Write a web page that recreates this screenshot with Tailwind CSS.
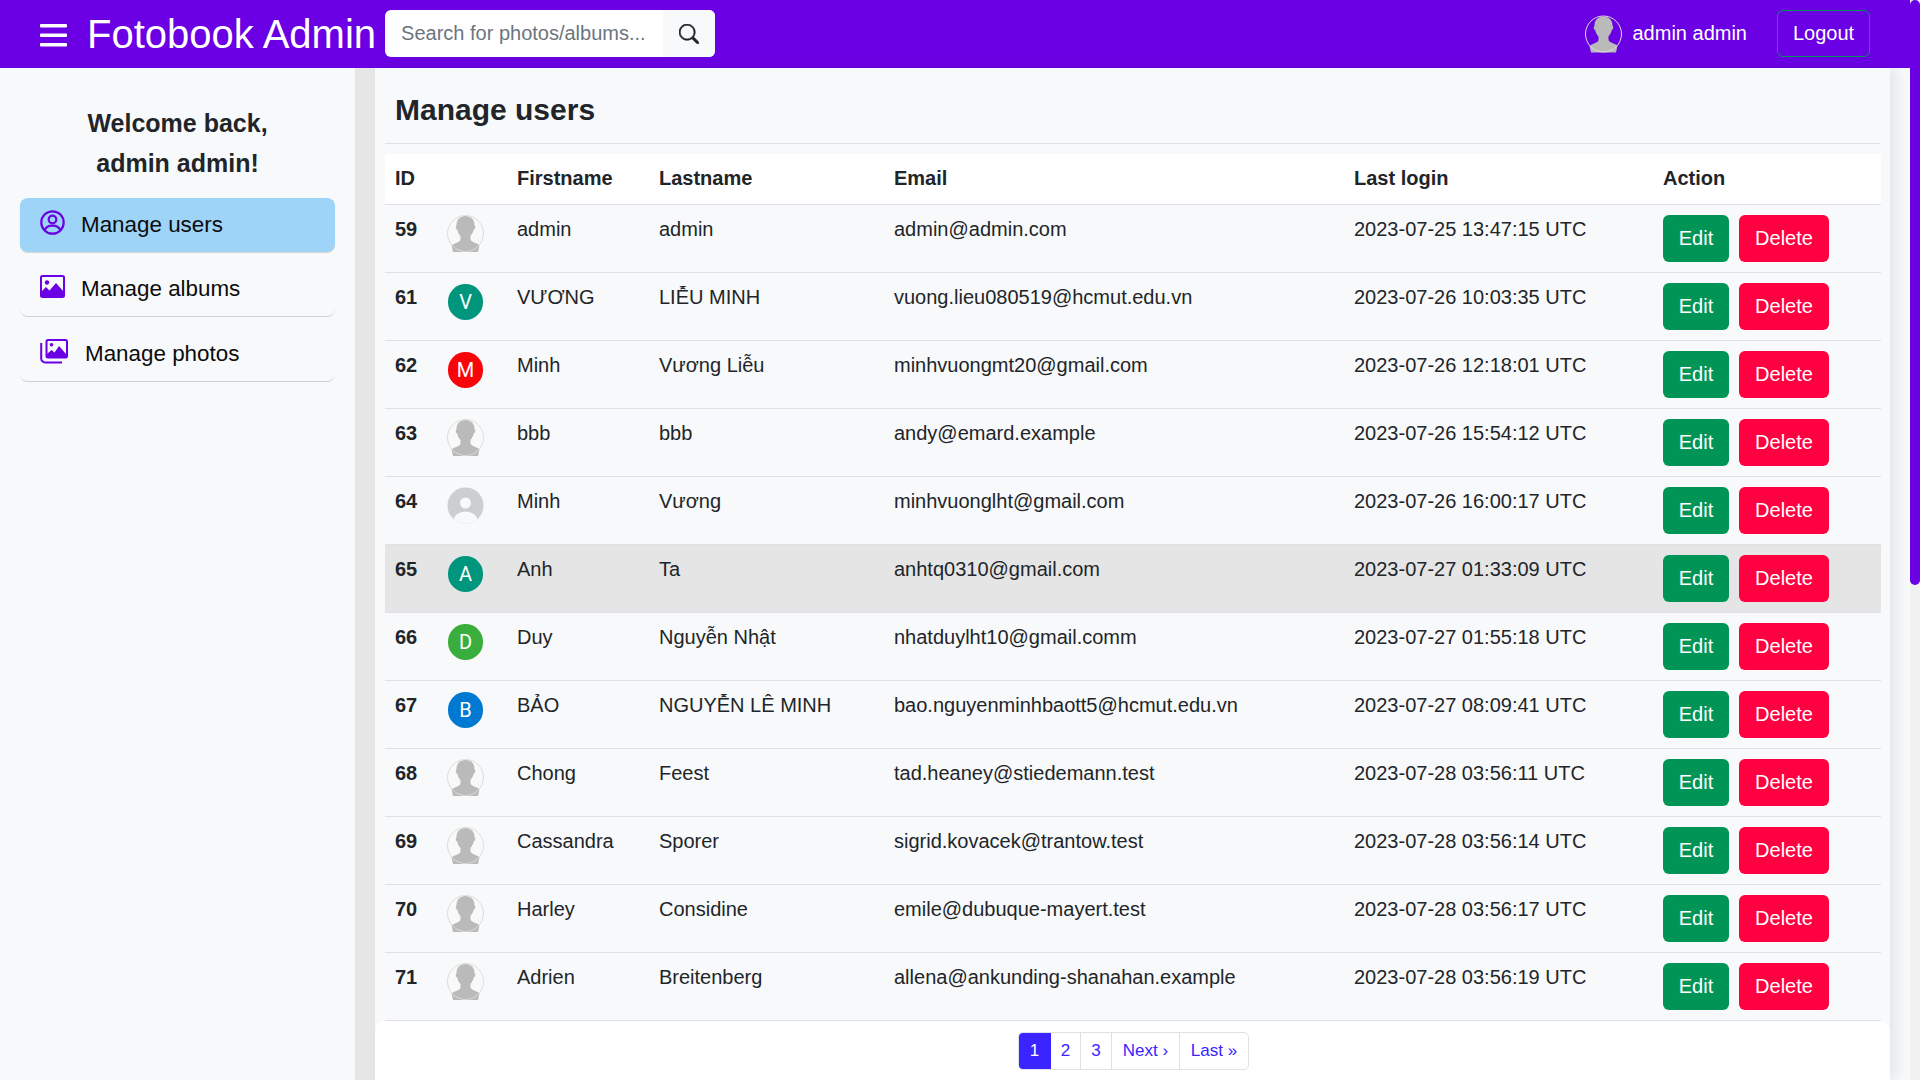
<!doctype html>
<html lang="en">
<head>
<meta charset="utf-8">
<title>Fotobook Admin</title>
<script src="https://cdn.jsdelivr.net/npm/@tailwindcss/browser@4"></script>
</head>
<body class="relative h-screen w-[1920px] overflow-hidden bg-[#f8f9fa] font-['Liberation_Sans',Arial,sans-serif] text-[20px] leading-[30px] text-[#212529]">
<svg class="hidden">
  <symbol id="sil" viewBox="0 0 37 37">
    <clipPath id="silc"><circle cx="18.5" cy="18.5" r="18"/></clipPath>
    <g clip-path="url(#silc)"><path fill="#bababa" d="M18.5 1C13 1 9.500 4.500 9.500 10c0 .8-.8 1-.8 2.200 0 1.300.7 2 1.500 2.600.5 2.500 1.700 4.700 3.300 6.200v3c0 1.500-1 2.500-2.700 3.200-2.500 1-4.500 1.700-6.300 3.300L6 37h25l1.500-6.800c-1.800-1.600-3.800-2.300-6.300-3.300-1.700-.7-2.700-1.700-2.700-3.200v-3c1.600-1.500 2.800-3.700 3.300-6.200.8-.6 1.500-1.300 1.500-2.600 0-1.200-.8-1.400-.8-2.200C27.500 4.500 24 1 18.500 1z"/></g>
    <circle cx="18.500" cy="18.500" r="18" fill="none" stroke="#dcdcdc" stroke-width="1"/>
  </symbol>
</svg>

<nav class="flex h-[68px] w-[1910px] items-center bg-[#6a00e3] pb-px pl-[40px] text-white">
  <svg class="mr-[20px] h-[26px] w-[27px]" viewBox="0 0 27 26" fill="#fff"><rect y="3" width="27" height="3.500" rx="1"/><rect y="12.500" width="27" height="3.500" rx="1"/><rect y="22" width="27" height="3.500" rx="1"/></svg>
  <span class="mr-[9px] whitespace-nowrap text-[40px] leading-[48px]">Fotobook Admin</span>
  <div class="flex h-[47px] w-[330px] overflow-hidden rounded-[6px] bg-white">
    <div class="flex w-[278px] items-center pb-[2px] pl-[16px] text-[20px] text-[#6c757d]">Search for photos/albums...</div>
    <div class="flex w-[52px] items-center justify-center bg-[#f8f9fa]">
      <svg class="h-[20px] w-[20px]" viewBox="0 0 16 16" fill="#212529" stroke="#212529" stroke-width=".5"><path d="M11.742 10.344a6.500 6.500 0 1 0-1.397 1.398l3.850 3.850a1 1 0 0 0 1.415-1.414l-3.868-3.834zM12 6.500a5.500 5.500 0 1 1-11 0 5.500 5.500 0 0 1 11 0z"/></svg>
    </div>
  </div>
  <div class="ml-auto flex items-center pr-[40px]">
    <svg class="mr-[10px] h-[38px] w-[37px]"><use href="#sil"/></svg>
    <span class="mr-[30px] pb-[2px]">admin admin</span>
    <span class="flex h-[47px] w-[93px] items-center justify-center rounded-[6px] border border-[#009557] pb-[2px]">Logout</span>
  </div>
</nav>

<div class="flex h-[1012px] w-[1910px]">
  <aside class="w-[355px] shrink-0 bg-[#f8f9fa] px-[20px] pt-[35px]">
    <p class="text-center text-[25px] leading-[40px] font-bold">Welcome back,<br>admin admin!</p>
    <ul class="mt-[15px] flex flex-col text-[22.400px] leading-[30px] text-[#0c0c0c]">
      <li class="flex h-[54px] items-center rounded-[8px] bg-[#9dd4f7] pl-[20px] shadow-[0_1px_1px_rgba(0,0,0,0.15)]">
        <svg class="mr-[16px] -mt-[6px] h-[25px] w-[25px]" viewBox="0 0 25 25" fill="none" stroke="#6a00e3" stroke-width="2.200"><circle cx="12.500" cy="12.500" r="11.200"/><circle cx="12.500" cy="9.500" r="3.800"/><path d="M4.700 20.500c1-3.500 4-4.800 7.800-4.800s6.800 1.300 7.800 4.800"/></svg>
        <span>Manage users</span>
      </li>
      <li class="mt-[11px] flex h-[54px] items-center rounded-b-[8px] border-b border-[#cfd0d2] pb-[2px] pl-[20px]">
        <svg class="mr-[16px] -mt-[2px] h-[25px] w-[25px]" viewBox="0 0 25 25"><rect x="1" y="1" width="23" height="21" rx="1.500" fill="none" stroke="#6a00e3" stroke-width="2"/><circle cx="7" cy="7.500" r="2.200" fill="#6a00e3"/><path d="M1 22v-5l5-5 3.500 3.500L16 8l8 9v5z" fill="#6a00e3"/></svg>
        <span>Manage albums</span>
      </li>
      <li class="mt-[11px] flex h-[54px] items-center rounded-b-[8px] border-b border-[#cfd0d2] pb-[2px] pl-[20px]">
        <svg class="mr-[17px] -mt-[5px] h-[25px] w-[28px]" viewBox="0 0 28 25"><path d="M1.200 4v15.500a4 4 0 0 0 4 4H22" fill="none" stroke="#6a00e3" stroke-width="2"/><rect x="6.500" y="1" width="20.500" height="17.500" rx="1.500" fill="none" stroke="#6a00e3" stroke-width="2"/><circle cx="11.500" cy="5.800" r="1.800" fill="#6a00e3"/><path d="M7 18v-3l4.500-4 3 2.500L19 7l7 8v3z" fill="#6a00e3"/></svg>
        <span>Manage photos</span>
      </li>
    </ul>
  </aside>
  <div class="w-[20px] shrink-0 bg-[#e6e6e6]"></div>

  <main class="flex w-[1515px] flex-col bg-[#f8f9fa] shadow-[8px_0_12px_rgba(0,0,0,0.07)]">
    <div class="mx-[10px] flex-1">
      <h1 class="flex h-[76px] items-center border-b border-[#dee2e6] pt-[8px] pl-[10px] text-[30px] font-bold">Manage users</h1>
      <table class="mt-[10px] w-[1496px] table-fixed border-collapse text-left">
        <colgroup><col class="w-[52px]"><col class="w-[70px]"><col class="w-[142px]"><col class="w-[235px]"><col class="w-[460px]"><col class="w-[309px]"><col class="w-[228px]"></colgroup>
        <thead>
          <tr class="h-[50px] border-b border-[#dee2e6] bg-white"><th class="pb-px pl-[10px]">ID</th><th></th><th class="pb-px pl-[10px]">Firstname</th><th class="pb-px pl-[10px]">Lastname</th><th class="pb-px pl-[10px]">Email</th><th class="pb-px pl-[10px]">Last login</th><th class="pb-px pl-[10px]">Action</th></tr>
        </thead>
        <tbody class="leading-[28px]">
          <tr class="h-[68px] border-b border-[#dee2e6]">
            <td class="pt-[10px] pl-[10px] align-top font-bold">59</td>
            <td class="pt-[10px] pl-[10px] align-top"><svg class="h-[37px] w-[37px]"><use href="#sil"/></svg></td>
            <td class="pt-[10px] pl-[10px] align-top">admin</td><td class="pt-[10px] pl-[10px] align-top">admin</td>
            <td class="pt-[10px] pl-[10px] align-top">admin@admin.com</td><td class="pt-[10px] pl-[10px] align-top">2023-07-25 13:47:15 UTC</td>
            <td class="pt-[10px] pl-[10px] align-top"><div class="flex gap-[10px]"><span class="flex h-[47px] w-[66px] items-center justify-center rounded-[6px] bg-[#009557] text-white">Edit</span><span class="flex h-[47px] w-[90px] items-center justify-center rounded-[6px] bg-[#ff0040] text-white">Delete</span></div></td>
          </tr>
          <tr class="h-[68px] border-b border-[#dee2e6]">
            <td class="pt-[10px] pl-[10px] align-top font-bold">61</td>
            <td class="pt-[10px] pl-[10px] align-top"><span class="mt-px ml-px flex h-[36px] w-[35px] items-center justify-center rounded-full bg-[#00967d] font-['Roboto',sans-serif] text-white">V</span></td>
            <td class="pt-[10px] pl-[10px] align-top">VƯƠNG</td><td class="pt-[10px] pl-[10px] align-top">LIỄU MINH</td>
            <td class="pt-[10px] pl-[10px] align-top">vuong.lieu080519@hcmut.edu.vn</td><td class="pt-[10px] pl-[10px] align-top">2023-07-26 10:03:35 UTC</td>
            <td class="pt-[10px] pl-[10px] align-top"><div class="flex gap-[10px]"><span class="flex h-[47px] w-[66px] items-center justify-center rounded-[6px] bg-[#009557] text-white">Edit</span><span class="flex h-[47px] w-[90px] items-center justify-center rounded-[6px] bg-[#ff0040] text-white">Delete</span></div></td>
          </tr>
          <tr class="h-[68px] border-b border-[#dee2e6]">
            <td class="pt-[10px] pl-[10px] align-top font-bold">62</td>
            <td class="pt-[10px] pl-[10px] align-top"><span class="mt-px ml-px flex h-[36px] w-[35px] items-center justify-center rounded-full bg-[#f80509] font-['Roboto',sans-serif] text-white">M</span></td>
            <td class="pt-[10px] pl-[10px] align-top">Minh</td><td class="pt-[10px] pl-[10px] align-top">Vương Liễu</td>
            <td class="pt-[10px] pl-[10px] align-top">minhvuongmt20@gmail.com</td><td class="pt-[10px] pl-[10px] align-top">2023-07-26 12:18:01 UTC</td>
            <td class="pt-[10px] pl-[10px] align-top"><div class="flex gap-[10px]"><span class="flex h-[47px] w-[66px] items-center justify-center rounded-[6px] bg-[#009557] text-white">Edit</span><span class="flex h-[47px] w-[90px] items-center justify-center rounded-[6px] bg-[#ff0040] text-white">Delete</span></div></td>
          </tr>
          <tr class="h-[68px] border-b border-[#dee2e6]">
            <td class="pt-[10px] pl-[10px] align-top font-bold">63</td>
            <td class="pt-[10px] pl-[10px] align-top"><svg class="h-[37px] w-[37px]"><use href="#sil"/></svg></td>
            <td class="pt-[10px] pl-[10px] align-top">bbb</td><td class="pt-[10px] pl-[10px] align-top">bbb</td>
            <td class="pt-[10px] pl-[10px] align-top">andy@emard.example</td><td class="pt-[10px] pl-[10px] align-top">2023-07-26 15:54:12 UTC</td>
            <td class="pt-[10px] pl-[10px] align-top"><div class="flex gap-[10px]"><span class="flex h-[47px] w-[66px] items-center justify-center rounded-[6px] bg-[#009557] text-white">Edit</span><span class="flex h-[47px] w-[90px] items-center justify-center rounded-[6px] bg-[#ff0040] text-white">Delete</span></div></td>
          </tr>
          <tr class="h-[68px] border-b border-[#dee2e6]">
            <td class="pt-[10px] pl-[10px] align-top font-bold">64</td>
            <td class="pt-[10px] pl-[10px] align-top"><svg class="h-[37px] w-[37px]" viewBox="0 0 37 37"><clipPath id="g64"><circle cx="18.500" cy="18.500" r="18"/></clipPath><circle cx="18.500" cy="18.500" r="18" fill="#ccced2"/><g clip-path="url(#g64)" fill="#f8f9fa"><circle cx="18.500" cy="16" r="5.500"/><ellipse cx="18.500" cy="34" rx="12" ry="9.500"/></g></svg></td>
            <td class="pt-[10px] pl-[10px] align-top">Minh</td><td class="pt-[10px] pl-[10px] align-top">Vương</td>
            <td class="pt-[10px] pl-[10px] align-top">minhvuonglht@gmail.com</td><td class="pt-[10px] pl-[10px] align-top">2023-07-26 16:00:17 UTC</td>
            <td class="pt-[10px] pl-[10px] align-top"><div class="flex gap-[10px]"><span class="flex h-[47px] w-[66px] items-center justify-center rounded-[6px] bg-[#009557] text-white">Edit</span><span class="flex h-[47px] w-[90px] items-center justify-center rounded-[6px] bg-[#ff0040] text-white">Delete</span></div></td>
          </tr>
          <tr class="h-[68px] border-b border-[#dee2e6] bg-[#e5e5e5]">
            <td class="pt-[10px] pl-[10px] align-top font-bold">65</td>
            <td class="pt-[10px] pl-[10px] align-top"><span class="mt-px ml-px flex h-[36px] w-[35px] items-center justify-center rounded-full bg-[#00967d] font-['Roboto',sans-serif] text-white">A</span></td>
            <td class="pt-[10px] pl-[10px] align-top">Anh</td><td class="pt-[10px] pl-[10px] align-top">Ta</td>
            <td class="pt-[10px] pl-[10px] align-top">anhtq0310@gmail.com</td><td class="pt-[10px] pl-[10px] align-top">2023-07-27 01:33:09 UTC</td>
            <td class="pt-[10px] pl-[10px] align-top"><div class="flex gap-[10px]"><span class="flex h-[47px] w-[66px] items-center justify-center rounded-[6px] bg-[#009557] text-white">Edit</span><span class="flex h-[47px] w-[90px] items-center justify-center rounded-[6px] bg-[#ff0040] text-white">Delete</span></div></td>
          </tr>
          <tr class="h-[68px] border-b border-[#dee2e6]">
            <td class="pt-[10px] pl-[10px] align-top font-bold">66</td>
            <td class="pt-[10px] pl-[10px] align-top"><span class="mt-px ml-px flex h-[36px] w-[35px] items-center justify-center rounded-full bg-[#39ae3c] font-['Roboto',sans-serif] text-white">D</span></td>
            <td class="pt-[10px] pl-[10px] align-top">Duy</td><td class="pt-[10px] pl-[10px] align-top">Nguyễn Nhật</td>
            <td class="pt-[10px] pl-[10px] align-top">nhatduylht10@gmail.comm</td><td class="pt-[10px] pl-[10px] align-top">2023-07-27 01:55:18 UTC</td>
            <td class="pt-[10px] pl-[10px] align-top"><div class="flex gap-[10px]"><span class="flex h-[47px] w-[66px] items-center justify-center rounded-[6px] bg-[#009557] text-white">Edit</span><span class="flex h-[47px] w-[90px] items-center justify-center rounded-[6px] bg-[#ff0040] text-white">Delete</span></div></td>
          </tr>
          <tr class="h-[68px] border-b border-[#dee2e6]">
            <td class="pt-[10px] pl-[10px] align-top font-bold">67</td>
            <td class="pt-[10px] pl-[10px] align-top"><span class="mt-px ml-px flex h-[36px] w-[35px] items-center justify-center rounded-full bg-[#0079d3] font-['Roboto',sans-serif] text-white">B</span></td>
            <td class="pt-[10px] pl-[10px] align-top">BẢO</td><td class="pt-[10px] pl-[10px] align-top">NGUYỄN LÊ MINH</td>
            <td class="pt-[10px] pl-[10px] align-top">bao.nguyenminhbaott5@hcmut.edu.vn</td><td class="pt-[10px] pl-[10px] align-top">2023-07-27 08:09:41 UTC</td>
            <td class="pt-[10px] pl-[10px] align-top"><div class="flex gap-[10px]"><span class="flex h-[47px] w-[66px] items-center justify-center rounded-[6px] bg-[#009557] text-white">Edit</span><span class="flex h-[47px] w-[90px] items-center justify-center rounded-[6px] bg-[#ff0040] text-white">Delete</span></div></td>
          </tr>
          <tr class="h-[68px] border-b border-[#dee2e6]">
            <td class="pt-[10px] pl-[10px] align-top font-bold">68</td>
            <td class="pt-[10px] pl-[10px] align-top"><svg class="h-[37px] w-[37px]"><use href="#sil"/></svg></td>
            <td class="pt-[10px] pl-[10px] align-top">Chong</td><td class="pt-[10px] pl-[10px] align-top">Feest</td>
            <td class="pt-[10px] pl-[10px] align-top">tad.heaney@stiedemann.test</td><td class="pt-[10px] pl-[10px] align-top">2023-07-28 03:56:11 UTC</td>
            <td class="pt-[10px] pl-[10px] align-top"><div class="flex gap-[10px]"><span class="flex h-[47px] w-[66px] items-center justify-center rounded-[6px] bg-[#009557] text-white">Edit</span><span class="flex h-[47px] w-[90px] items-center justify-center rounded-[6px] bg-[#ff0040] text-white">Delete</span></div></td>
          </tr>
          <tr class="h-[68px] border-b border-[#dee2e6]">
            <td class="pt-[10px] pl-[10px] align-top font-bold">69</td>
            <td class="pt-[10px] pl-[10px] align-top"><svg class="h-[37px] w-[37px]"><use href="#sil"/></svg></td>
            <td class="pt-[10px] pl-[10px] align-top">Cassandra</td><td class="pt-[10px] pl-[10px] align-top">Sporer</td>
            <td class="pt-[10px] pl-[10px] align-top">sigrid.kovacek@trantow.test</td><td class="pt-[10px] pl-[10px] align-top">2023-07-28 03:56:14 UTC</td>
            <td class="pt-[10px] pl-[10px] align-top"><div class="flex gap-[10px]"><span class="flex h-[47px] w-[66px] items-center justify-center rounded-[6px] bg-[#009557] text-white">Edit</span><span class="flex h-[47px] w-[90px] items-center justify-center rounded-[6px] bg-[#ff0040] text-white">Delete</span></div></td>
          </tr>
          <tr class="h-[68px] border-b border-[#dee2e6]">
            <td class="pt-[10px] pl-[10px] align-top font-bold">70</td>
            <td class="pt-[10px] pl-[10px] align-top"><svg class="h-[37px] w-[37px]"><use href="#sil"/></svg></td>
            <td class="pt-[10px] pl-[10px] align-top">Harley</td><td class="pt-[10px] pl-[10px] align-top">Considine</td>
            <td class="pt-[10px] pl-[10px] align-top">emile@dubuque-mayert.test</td><td class="pt-[10px] pl-[10px] align-top">2023-07-28 03:56:17 UTC</td>
            <td class="pt-[10px] pl-[10px] align-top"><div class="flex gap-[10px]"><span class="flex h-[47px] w-[66px] items-center justify-center rounded-[6px] bg-[#009557] text-white">Edit</span><span class="flex h-[47px] w-[90px] items-center justify-center rounded-[6px] bg-[#ff0040] text-white">Delete</span></div></td>
          </tr>
          <tr class="h-[68px] border-b border-[#dee2e6]">
            <td class="pt-[10px] pl-[10px] align-top font-bold">71</td>
            <td class="pt-[10px] pl-[10px] align-top"><svg class="h-[37px] w-[37px]"><use href="#sil"/></svg></td>
            <td class="pt-[10px] pl-[10px] align-top">Adrien</td><td class="pt-[10px] pl-[10px] align-top">Breitenberg</td>
            <td class="pt-[10px] pl-[10px] align-top">allena@ankunding-shanahan.example</td><td class="pt-[10px] pl-[10px] align-top">2023-07-28 03:56:19 UTC</td>
            <td class="pt-[10px] pl-[10px] align-top"><div class="flex gap-[10px]"><span class="flex h-[47px] w-[66px] items-center justify-center rounded-[6px] bg-[#009557] text-white">Edit</span><span class="flex h-[47px] w-[90px] items-center justify-center rounded-[6px] bg-[#ff0040] text-white">Delete</span></div></td>
          </tr>
        </tbody>
      </table>
    </div>
    <div class="flex h-[70px] shrink-0 justify-center rounded-[10px] bg-white pt-[11px] pl-[2px]">
      <div class="flex h-[38px] overflow-hidden rounded-[5px] border border-[#dee2e6] text-[17px] leading-[36px] text-[#3a24ff]">
        <span class="-my-px -ml-px w-[33px] bg-[#3a24ff] text-center leading-[38px] text-white">1</span>
        <span class="w-[30px] border-r border-[#dee2e6] text-center">2</span>
        <span class="w-[31px] border-r border-[#dee2e6] text-center">3</span>
        <span class="w-[68px] border-r border-[#dee2e6] text-center">Next ›</span>
        <span class="w-[68px] text-center">Last »</span>
      </div>
    </div>
  </main>
</div>

<div class="absolute top-0 right-0 h-full w-[10px] bg-[#f1f1f1]">
  <div class="h-[585px] w-[10px] rounded-[5px] bg-[#6a00e3]"></div>
</div>
</body>
</html>
